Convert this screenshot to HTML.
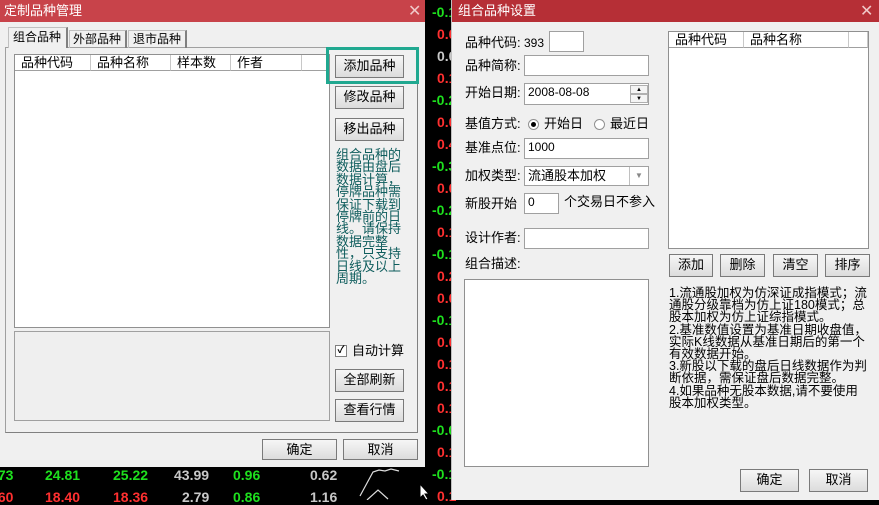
<!DOCTYPE html>
<html><head><meta charset="utf-8"><style>
*{box-sizing:border-box;margin:0;padding:0}
body{width:879px;height:500px;background:#000;position:relative;overflow:hidden;font-family:"Liberation Sans","Noto Sans CJK SC",sans-serif;font-size:12px;color:#000}
.a{position:absolute;white-space:nowrap}
.dlg{position:absolute;background:#f0f0f0}
.tb{position:absolute;left:0;right:0;top:0;height:22px;color:#fff;font-size:13px;line-height:22px;padding:0 0 0 4px}
.btn{position:absolute;border:1px solid #7a7a7a;background:linear-gradient(#f6f6f6,#dcdcdc);text-align:center;font-size:13px;line-height:20px}
.in{position:absolute;background:#fff;border:1px solid #a0a0a0}
.lb{position:absolute;font-size:13px;line-height:16px;white-space:nowrap}
.num{position:absolute;font-family:"Liberation Sans",sans-serif;font-weight:bold;font-size:14px}
.g{color:#1ee01e}.r{color:#ff3030}.w{color:#c8c8c8}
.hd{position:absolute;top:0;height:16px;border-right:1px solid #c8c8c8;border-bottom:1px solid #a0a0a0;font-size:13px;line-height:15px;padding-left:6px;overflow:hidden}
</style></head><body>

<div class="num g" style="left:432px;top:4px">-0.1</div>
<div class="num r" style="left:437px;top:26px">0.0</div>
<div class="num w" style="left:437px;top:48px">0.0</div>
<div class="num r" style="left:437px;top:70px">0.1</div>
<div class="num g" style="left:432px;top:92px">-0.2</div>
<div class="num r" style="left:437px;top:114px">0.0</div>
<div class="num r" style="left:437px;top:136px">0.4</div>
<div class="num g" style="left:432px;top:158px">-0.3</div>
<div class="num r" style="left:437px;top:180px">0.0</div>
<div class="num g" style="left:432px;top:202px">-0.2</div>
<div class="num r" style="left:437px;top:224px">0.1</div>
<div class="num g" style="left:432px;top:246px">-0.1</div>
<div class="num r" style="left:437px;top:268px">0.2</div>
<div class="num r" style="left:437px;top:290px">0.0</div>
<div class="num g" style="left:432px;top:312px">-0.1</div>
<div class="num r" style="left:437px;top:334px">0.0</div>
<div class="num r" style="left:437px;top:356px">0.1</div>
<div class="num r" style="left:437px;top:378px">0.1</div>
<div class="num r" style="left:437px;top:400px">0.1</div>
<div class="num g" style="left:432px;top:422px">-0.0</div>
<div class="num r" style="left:437px;top:444px">0.1</div>
<div class="num g" style="left:432px;top:466px">-0.1</div>
<div class="num r" style="left:437px;top:488px">0.1</div>

<div class="num g" style="left:-6px;top:467px">.73</div>
<div class="num g" style="left:45px;top:467px">24.81</div>
<div class="num g" style="left:113px;top:467px">25.22</div>
<div class="num w" style="left:174px;top:467px">43.99</div>
<div class="num g" style="left:233px;top:467px">0.96</div>
<div class="num w" style="left:310px;top:467px">0.62</div>
<div class="num r" style="left:-6px;top:489px">.60</div>
<div class="num r" style="left:45px;top:489px">18.40</div>
<div class="num r" style="left:113px;top:489px">18.36</div>
<div class="num w" style="left:182px;top:489px">2.79</div>
<div class="num g" style="left:233px;top:489px">0.86</div>
<div class="num w" style="left:310px;top:489px">1.16</div>
<svg class="a" style="left:355px;top:466px" width="50" height="34"><polyline points="5,30 18,6 24,4 30,5 36,3 44,5" fill="none" stroke="#ddd" stroke-width="1.2"/><polyline points="12,34 23,24 33,33" fill="none" stroke="#ddd" stroke-width="1.2"/></svg>
<svg class="a" style="left:419px;top:483px" width="12" height="17"><path d="M1,1 L1,15 L4,12 L7,17 L9,16 L6,11 L10,11 Z" fill="#fff" stroke="#000"/></svg>

<div class="dlg" style="left:0;top:0;width:425px;height:467px">
 <div class="tb" style="background:#c8434a">定制品种管理</div>
 <div class="a" style="left:408px;top:1px;color:#f0c8c8;font-size:16px">✕</div>
 <div class="a" style="left:5px;top:47px;width:413px;height:386px;border:1px solid #a0a0a0;border-right-color:#808080;border-bottom-color:#808080"></div>
 <div class="a" style="left:8px;top:27px;width:60px;height:21px;background:#f0f0f0;border:1px solid #c0c0c0;border-bottom:none;border-right:2px solid #808080;font-size:12px;line-height:18px;padding:0 0 0 4px">组合品种</div>
 <div class="a" style="left:69px;top:30px;width:58px;height:18px;border:1px solid #c0c0c0;border-right:2px solid #808080;border-bottom:none;font-size:12px;line-height:17px;padding:0 0 0 3px">外部品种</div>
 <div class="a" style="left:128px;top:30px;width:59px;height:18px;border:1px solid #c0c0c0;border-right:2px solid #808080;border-bottom:none;font-size:12px;line-height:17px;padding:0 0 0 4px">退市品种</div>
 <div class="in" style="left:14px;top:54px;width:316px;height:274px;border-color:#909090">
  <div class="hd" style="left:0;width:76px">品种代码</div>
  <div class="hd" style="left:76px;width:80px">品种名称</div>
  <div class="hd" style="left:156px;width:60px">样本数</div>
  <div class="hd" style="left:216px;width:71px">作者</div>
  <div class="hd" style="left:287px;width:27px"></div>
 </div>
 <div class="a" style="left:14px;top:331px;width:316px;height:90px;border:1px solid #a0a0a0;background:#efefef"></div>
 <div class="a" style="left:326px;top:47px;width:93px;height:37px;border:3px solid #20a890"></div>
 <div class="btn" style="left:335px;top:55px;width:69px;height:23px">添加品种</div>
 <div class="btn" style="left:335px;top:86px;width:69px;height:23px">修改品种</div>
 <div class="btn" style="left:335px;top:118px;width:69px;height:23px">移出品种</div>
 <div class="a" style="left:336px;top:149px;width:66px;font-size:13px;line-height:12.4px;color:#0d5c5c;white-space:normal;word-break:break-all">组合品种的数据由盘后数据计算，停牌品种需保证下载到停牌前的日线。请保持数据完整性，只支持日线及以上周期。</div>
 <div class="a" style="left:335px;top:345px;width:12px;height:12px;border:1px solid #808080;background:#fff;font-size:10px;line-height:10px;text-align:center;font-weight:bold">✓</div>
 <div class="lb" style="left:352px;top:343px">自动计算</div>
 <div class="btn" style="left:335px;top:369px;width:69px;height:23px">全部刷新</div>
 <div class="btn" style="left:335px;top:399px;width:69px;height:23px">查看行情</div>
 <div class="btn" style="left:262px;top:439px;width:75px;height:21px">确定</div>
 <div class="btn" style="left:343px;top:439px;width:75px;height:21px">取消</div>
</div>

<div class="dlg" style="left:451px;top:0;width:428px;height:500px;border-left:1px solid #c0c0c0">
 <div class="tb" style="background:#b62f36;padding-left:6px">组合品种设置</div>
 <div class="a" style="left:408px;top:1px;color:#f0c8c8;font-size:16px">✕</div>
 <div class="lb" style="left:13px;top:35px">品种代码:</div>
 <div class="a" style="left:72px;top:36px;font-size:12px">393</div>
 <div class="in" style="left:97px;top:31px;width:35px;height:21px"></div>
 <div class="lb" style="left:13px;top:58px">品种简称:</div>
 <div class="in" style="left:72px;top:55px;width:125px;height:21px"></div>
 <div class="lb" style="left:13px;top:85px">开始日期:</div>
 <div class="in" style="left:72px;top:83px;width:125px;height:22px;padding:1px 3px;font-size:12px">2008-08-08</div>
 <div class="a" style="left:178px;top:85px;width:18px;height:9px;border:1px solid #b0b0b0;background:#f4f4f4;font-size:6px;text-align:center;line-height:8px">▲</div>
 <div class="a" style="left:178px;top:94px;width:18px;height:9px;border:1px solid #b0b0b0;background:#f4f4f4;font-size:6px;text-align:center;line-height:8px">▼</div>
 <div class="lb" style="left:13px;top:116px">基值方式:</div>
 <div class="a" style="left:76px;top:119px;width:11px;height:11px;border-radius:50%;border:1px solid #909090;background:#fff"><div style="width:5px;height:5px;border-radius:50%;background:#000;margin:2px"></div></div>
 <div class="lb" style="left:92px;top:116px">开始日</div>
 <div class="a" style="left:142px;top:119px;width:11px;height:11px;border-radius:50%;border:1px solid #909090;background:#fff"></div>
 <div class="lb" style="left:158px;top:116px">最近日</div>
 <div class="lb" style="left:13px;top:140px">基准点位:</div>
 <div class="in" style="left:72px;top:138px;width:125px;height:21px;padding:1px 3px;font-size:12px">1000</div>
 <div class="lb" style="left:13px;top:168px">加权类型:</div>
 <div class="in" style="left:72px;top:166px;width:125px;height:20px;padding:0 3px;font-size:13px;line-height:18px">流通股本加权</div>
 <div class="a" style="left:177px;top:167px;width:19px;height:18px;border-left:1px solid #c0c0c0;color:#888;font-size:8px;text-align:center;line-height:18px">▼</div>
 <div class="lb" style="left:13px;top:196px">新股开始</div>
 <div class="in" style="left:72px;top:193px;width:35px;height:21px;padding:1px 3px;font-size:12px">0</div>
 <div class="lb" style="left:112px;top:194px">个交易日不参入</div>
 <div class="lb" style="left:13px;top:230px">设计作者:</div>
 <div class="in" style="left:72px;top:228px;width:125px;height:21px"></div>
 <div class="lb" style="left:13px;top:256px">组合描述:</div>
 <div class="in" style="left:12px;top:279px;width:185px;height:188px;border-color:#909090"></div>
 <div class="in" style="left:216px;top:31px;width:201px;height:218px;border-color:#909090">
  <div class="hd" style="left:0;width:75px">品种代码</div>
  <div class="hd" style="left:75px;width:105px">品种名称</div>
  <div class="hd" style="left:180px;width:19px"></div>
 </div>
 <div class="btn" style="left:217px;top:254px;width:44px;height:23px">添加</div>
 <div class="btn" style="left:268px;top:254px;width:45px;height:23px">删除</div>
 <div class="btn" style="left:321px;top:254px;width:45px;height:23px">清空</div>
 <div class="btn" style="left:373px;top:254px;width:45px;height:23px">排序</div>
 <div class="a" style="left:217px;top:287px;width:200px;font-size:12.5px;line-height:12.2px;white-space:normal;word-break:break-all">1.流通股加权为仿深证成指模式；流通股分级靠档为仿上证180模式；总股本加权为仿上证综指模式。<br>2.基准数值设置为基准日期收盘值，实际K线数据从基准日期后的第一个有效数据开始。<br>3.新股以下载的盘后日线数据作为判断依据，需保证盘后数据完整。<br>4.如果品种无股本数据,请不要使用股本加权类型。</div>
 <div class="btn" style="left:288px;top:469px;width:59px;height:23px">确定</div>
 <div class="btn" style="left:357px;top:469px;width:59px;height:23px">取消</div>
</div>
</body></html>
